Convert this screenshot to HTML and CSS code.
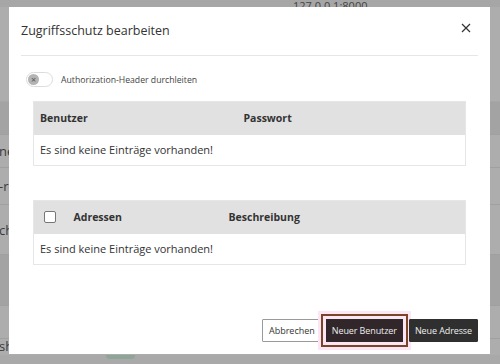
FILE: index.html
```html
<!DOCTYPE html>
<html lang="de">
<head>
    <meta charset="UTF-8">
    <meta name="viewport" content="width=device-width, initial-scale=1.0">
    <title>Zugriffsschutz bearbeiten</title>
    <link rel="stylesheet" href="styles.css">
</head>
<body>

    <!-- page behind the overlay -->
    <div class="page">
        <div class="bg-row bg-top"><span class="url">127.0.0.1:8000</span></div>
        <div class="bg-row bg-space"></div>
        <div class="bg-row bg-head"></div>
        <div class="bg-row bg-line"><span>ne</span></div>
        <div class="bg-row bg-line bg-r2"><span>-r</span></div>
        <div class="bg-row bg-line bg-r3"><span>ch</span></div>
        <div class="bg-row bg-head bg-r4"></div>
        <div class="bg-row bg-line"></div>
        <div class="bg-row bg-line bg-r6"><span>sh</span></div>
        <div class="bg-row bg-foot"><i class="pill"></i></div>
    </div>

    <div class="modal">
        <div class="modal-header">
            <h2>Zugriffsschutz bearbeiten</h2>
            <button class="close" aria-label="Schließen">
                <svg width="10" height="10" viewBox="0 0 10 10"><path d="M1 1L9 9M9 1L1 9" stroke="#333" stroke-width="1.2" fill="none"/></svg>
            </button>
        </div>

        <div class="modal-body">
            <label class="switch-row">
                <span class="switch"><span class="knob">×</span></span>
                Authorization-Header durchleiten
            </label>

            <table class="grid">
                <thead>
                    <tr><th class="col-user">Benutzer</th><th>Passwort</th></tr>
                </thead>
                <tbody>
                    <tr><td colspan="2">Es sind keine Einträge vorhanden!</td></tr>
                </tbody>
            </table>

            <table class="grid">
                <thead>
                    <tr>
                        <th class="col-check"><span class="checkbox"></span></th>
                        <th class="col-addr">Adressen</th>
                        <th>Beschreibung</th>
                    </tr>
                </thead>
                <tbody>
                    <tr><td colspan="3">Es sind keine Einträge vorhanden!</td></tr>
                </tbody>
            </table>
        </div>

        <div class="modal-footer">
            <button class="btn btn-light">Abbrechen</button>
            <button class="btn btn-dark btn-focus">Neuer Benutzer</button>
            <button class="btn btn-dark">Neue Adresse</button>
        </div>
    </div>

</body>
</html>
```

FILE: styles.css
```css
* {
    box-sizing: border-box;
}
body {
    margin: 0;
    width: 500px;
    height: 364px;
    overflow: hidden;
    font-family: 'Open Sans', 'Liberation Sans', sans-serif;
    color: #333;
    background: #adadad;
    position: relative;
}

/* background page, dimmed */
.page {
    display: flex;
    flex-direction: column;
}
.bg-row {
    background: #adadad;
    border-bottom: 1px solid #a0a0a0;
    font-size: 13px;
    color: #3a3a3a;
    display: flex;
    align-items: center;
}
.bg-row span {
    margin-left: -1px;
}
.bg-top {
    height: 7px;
    align-items: flex-end;
    border: none;
    background: #a6a6a6;
}
.url {
    margin-left: 293px !important;
    font-size: 11px;
    line-height: 11px;
    color: #444;
    transform: translateY(4px);
}
.bg-space { height: 95px; border-color: #a6a6a6; }
.bg-head { height: 33px; background: #a3a3a3; }
.bg-line { height: 33px; }
.bg-r2 { height: 37px; }
.bg-r3 { height: 50px; }
.bg-r4 { height: 51px; }
.bg-r6 { height: 16px; align-items: flex-end; border: none; }
.bg-foot {
    height: 9px;
    background: #a9a9a9;
    border: none;
    align-items: flex-start;
}
.pill {
    display: block;
    margin-left: 106px;
    width: 29px;
    height: 4px;
    background: #8fa597;
    border-radius: 0 0 4px 4px;
}

/* modal */
.modal {
    position: absolute;
    left: 9px;
    top: 7px;
    width: 481px;
    height: 347px;
    background: #fff;
    padding: 0 12px 12px;
    display: flex;
    flex-direction: column;
}
.modal-header {
    height: 49px;
    border-bottom: 1px solid #e6e6e6;
    display: flex;
    align-items: center;
    justify-content: space-between;
}
.modal-header h2 {
    margin: 0 0 2px;
    font-size: 12.5px;
    font-weight: normal;
    color: #333;
}
.close {
    border: none;
    background: none;
    padding: 0;
    margin: 0 7px 6px 0;
    width: 10px;
    height: 10px;
    display: flex;
}

.modal-body {
    padding: 16px 12px 0;
    flex: 1;
}
.switch-row {
    display: flex;
    align-items: center;
    gap: 8px;
    margin-left: -7px;
    font-size: 8.7px;
    color: #444;
    height: 15px;
}
.switch {
    width: 27px;
    height: 15px;
    border: 1px solid #dcdcdc;
    border-radius: 8px;
    display: flex;
    align-items: center;
    padding-left: 1px;
}
.knob {
    width: 11px;
    height: 11px;
    border-radius: 50%;
    background: #b4b4b4;
    color: #555;
    font-size: 9px;
    line-height: 11px;
    text-align: center;
}

.grid {
    width: 100%;
    border-collapse: collapse;
    border: 1px solid #e6e6e6;
    font-size: 11px;
    margin-top: 14px;
}
.grid + .grid {
    margin-top: 34px;
}
.grid th {
    background: #e1e1e1;
    height: 33px;
    text-align: left;
    font-weight: bold;
    font-size: 10.5px;
    padding: 0 6px;
    color: #333;
}
.grid td {
    height: 31px;
    padding: 0 6px;
    color: #333;
}
.col-user { width: 204px; }
.col-check { width: 34px; padding: 0 0 0 10px !important; }
.col-addr { width: 155px; }
.checkbox {
    display: block;
    width: 12px;
    height: 12px;
    border: 1px solid #777;
    border-radius: 2px;
    background: #fff;
}

.modal-footer {
    display: flex;
    justify-content: flex-end;
    gap: 4px;
}
.btn {
    font-family: 'Open Sans', 'Liberation Sans', sans-serif;
    font-size: 9px;
    height: 23px;
    padding: 0 6px;
    border-radius: 1px;
    cursor: pointer;
}
.btn-light {
    background: #fff;
    border: 1px solid #9a9a9a;
    color: #333;
}
.btn-dark {
    background: #2f2f2f;
    border: 1px solid #2f2f2f;
    color: #eee;
    padding: 0 5px;
    letter-spacing: -0.1px;
}
.btn-focus {
    background: #31262a;
    border-color: #31262a;
    border-radius: 0;
    outline: 2px solid #7a4527;
    outline-offset: 3px;
    box-shadow: 0 0 0 8px #fce6f5;
    margin-right: 2px;
}
```
